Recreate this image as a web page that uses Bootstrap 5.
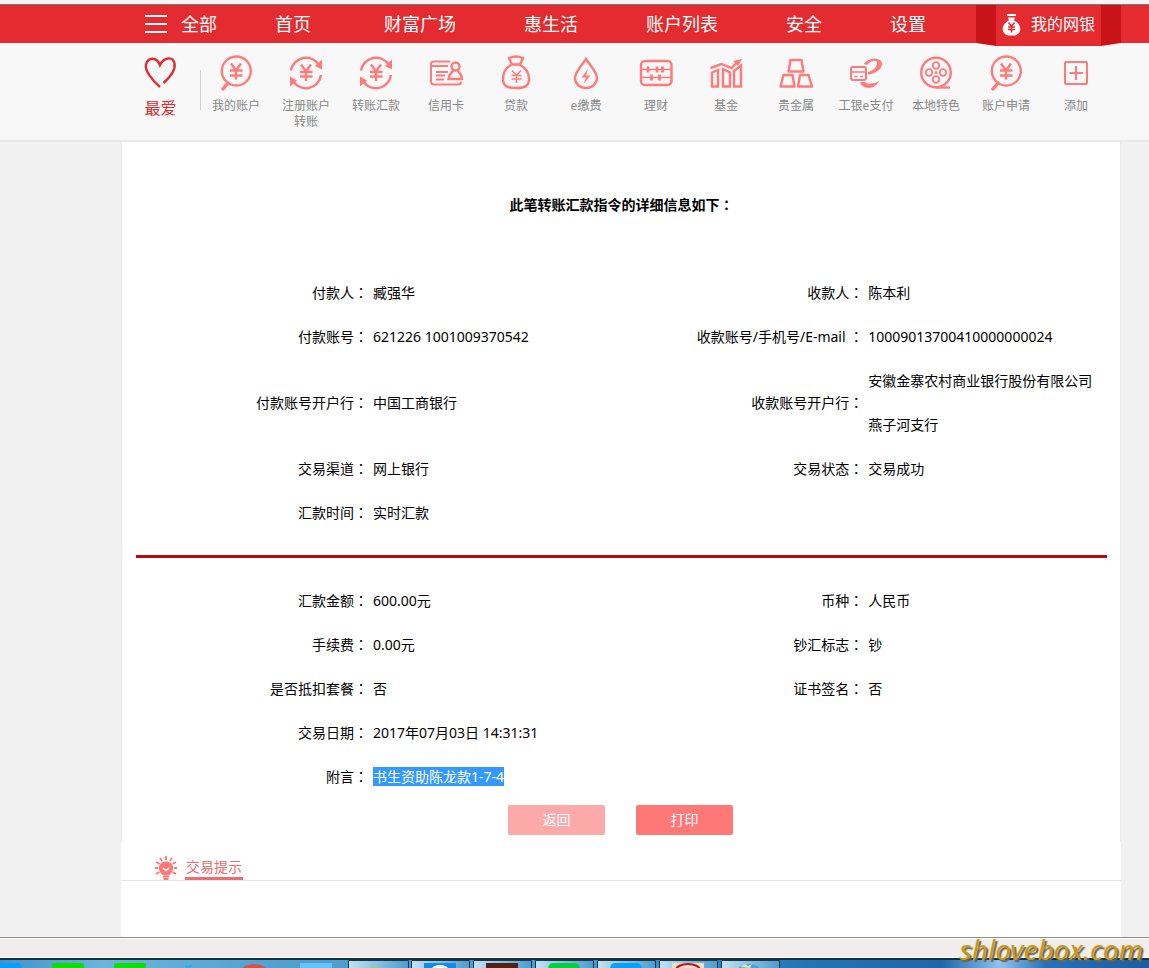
<!DOCTYPE html>
<html lang="zh-CN">
<head>
<meta charset="utf-8">
<meta name="viewport" content="width=device-width, initial-scale=1">
<title>转账汇款详细信息</title>
<link href="https://cdn.jsdelivr.net/npm/bootstrap@5.3.0/dist/css/bootstrap.min.css" rel="stylesheet">
<style>
  body { background: #f1f1f1; color: #000; font-family: "Noto Sans", "Noto Sans CJK SC", sans-serif; font-size: 14px; line-height: 20px; overflow-x: hidden; }
  a { text-decoration: none; }
  .window-edge { height: 5px; background: #f5f5f5; border-bottom: 1px solid #777; }
  .frame { padding-left: 121px; padding-right: 28px; }
  .main-bar { background: #e32b30; height: 38px; }
  .main-bar a { color: #fff; font-size: 18px; line-height: 38px; white-space: nowrap; }
  .main-links { gap: 68px; padding-left: 58px; }
  .main-links a:first-child { margin-right: 5px; }
  .all-link { padding-left: 24px; gap: 14px; }
  .ribbon { height: 41px; }
  .ribbon::before, .ribbon::after { content: ""; width: 20px; background: #c81418; clip-path: polygon(0 0, 100% 0, 100% 100%, 0 38px); }
  .ribbon::after { clip-path: polygon(0 0, 100% 0, 100% 38px, 0 100%); }
  .main-bar .ribbon a { width: 105px; gap: 10px; padding-bottom: 3px; background: #e32b30; font-size: 16px; }
  .sub-bar { background: #f8f8f8; height: 99px; border-bottom: 2px solid #e9e9e9; }
  .sub-bar a { width: 70px; padding-top: 12px; color: #888; font-size: 12px; line-height: 16px; text-align: center; }
  .sub-bar svg { display: block; margin: 0 auto 7px; fill: none; stroke: #ff7b7b; stroke-width: 2.400; }
  .sub-bar .favorite { width: 79px; color: #e32b30; font-size: 16px; line-height: 20px; }
  .sub-bar .favorite svg { stroke: #e32b30; }
  .divider { width: 1px; height: 40px; margin-top: 27px; background: #d0d0d0; }
  .sheet { background: #fff; border: solid #e9e9e9; border-width: 0 1px; padding: 52px 13px 7px 14px; }
  .sheet h1 { font-size: 14px; line-height: 20px; margin-bottom: 56px; }
  .detail { width: 100%; table-layout: fixed; }
  .detail th, .detail td { height: 44px; line-height: 44px; padding: 0 0 0 4px; font-weight: 400; vertical-align: middle; }
  .detail th { text-align: right; padding: 0 1px 0 0; white-space: nowrap; }
  .colon { font-family: "Noto Sans CJK TC", sans-serif; line-height: 20px; }
  .rule { height: 3px; margin: 20px 0 21px; background: #b5090f; }
  .picked { background: #3399ff; color: #fff; }
  .actions { gap: 31px; padding: 6px 2px 0 0; }
  .action { width: 97px; height: 30px; border: 0; border-radius: 2px; background: #ff7878; color: #fff; }
  .action-soft { background: #fca9a9; }
  .tips-head { height: 39px; border-bottom: 1px solid #e6e6e6; padding-left: 33px; gap: 7px; }
  .tips-head h2 { margin: 0; padding: 0 1px; font-size: 14px; font-weight: 400; line-height: 20px; height: 23px; border-bottom: 3px solid #ed6d6f; color: #ed6d6f; }
  .tips-body { height: 56px; }
  .status-strip { height: 21px; background: #f0edec; border-top: 1px solid #8e8e8e; border-bottom: 1px solid #fff; box-shadow: inset 0 1px #fff; }
  .taskbar { height: 10px; overflow: hidden; border-top: 2px solid #172f40; background: linear-gradient(90deg, #3e94ca, #69b5dc 9%, #4d9fd0 26%, #489dcf 50%, #2274b7 70%, #1b67ab 82%, #90c2ed 87%, #2672b7 91%, #1b5e9f); }
  .taskbar svg { display: block; }
  .watermark { position: absolute; right: 6px; bottom: 0; color: #cc990c; font: italic 400 28px/38px "Noto Sans", sans-serif; text-shadow: 2px 2px 1px #666; }
</style>
</head>
<body>
<svg width="0" height="0" class="position-absolute" aria-hidden="true">
  <symbol id="yen-search" viewBox="0 0 40 36"><circle cx="20.3" cy="16" r="14.5"/><path d="M12 28l-5 6" stroke-width="3.500" stroke-linecap="round"/><path d="M15 8.500l5 7 5-7M14 15.500h12.500M14 20.500h12.500M20 15v9.500"/></symbol>
  <symbol id="yen-cycle" viewBox="0 0 40 36"><path d="M5 15.500A15.200 15.200 0 0 1 33 10M35 20A15.200 15.200 0 0 1 7 26"/><path d="M36 4.500v10l-7-3.500zM4 21.500v10l7-6z" fill="#ff7b7b" stroke="none"/><path d="M15 9.500l5 7 5-7M14 17h12.500M14 21.500h12.500M20 17v9"/></symbol>
</svg>

<div class="window-edge"></div>
<header>
  <nav class="main-bar frame d-flex align-items-start" aria-label="主菜单">
    <a href="#" class="all-link d-flex align-items-center">
      <svg width="22" height="18" viewBox="0 0 22 18" stroke="#fff" stroke-width="2"><path d="M0 1h22M0 9h22M0 17h22"/></svg>全部
    </a>
    <div class="main-links d-flex">
      <a href="#">首页</a><a href="#">财富广场</a><a href="#">惠生活</a><a href="#">账户列表</a><a href="#">安全</a><a href="#">设置</a>
    </div>
    <div class="ribbon d-flex ms-auto">
      <a href="#" class="d-flex align-items-center justify-content-center">
        <svg width="19" height="23" viewBox="0 0 19 23"><path d="M5 1h9v2H5z" fill="#fff"/><path d="M6 4.500h7l-1 3c9 4 8 15-1 15H8C-1 22.500-2 11.500 7 7.500z" fill="#fff"/><path d="M6.500 9.500l3 4 3-4M6 14h7M6 16.500h7M9.500 13.500v6" fill="none" stroke="#e32b30" stroke-width="1.500"/></svg>我的网银
      </a>
    </div>
  </nav>
  <nav class="sub-bar frame d-flex align-items-start" aria-label="快捷功能">
    <a href="#" class="favorite"><svg width="40" height="36" viewBox="0 0 40 36"><path d="M19 32C12 26 3.500 16 5 9.500 7 1.500 16 2 19 10 23 2 32 1 33.500 8.500 35 16 27 24 22.500 28"/></svg>最爱</a>
    <div class="divider"></div>
    <a href="#"><svg width="40" height="36"><use href="#yen-search"/></svg>我的账户</a>
    <a href="#" class="px-2"><svg width="40" height="36"><use href="#yen-cycle"/></svg>注册账户转账</a>
    <a href="#"><svg width="40" height="36"><use href="#yen-cycle"/></svg>转账汇款</a>
    <a href="#"><svg width="40" height="36" viewBox="0 0 40 36"><path d="M24 6.500H8q-3 0-3 3v17q0 3 3 3h24q3 0 3-3M5 11h17M10 17h12M10 20.500h9M10 24.500h8" stroke-width="2"/><circle cx="29.500" cy="11.500" r="4"/><path d="M27 15c0 3-4.500 3-4.500 9H36c0-6-4-6-4-9"/></svg>信用卡</a>
    <a href="#"><svg width="40" height="36" viewBox="0 0 40 36"><path d="M16 9.500L13 3q7-3 14 0l-3 6.500zM15 10C9 13 7 18 7 24c0 7 4 9 13 9s13-2 13-9c0-6-3-11-9-14"/><path d="M16 15.500l4.500 5 4.500-5M15.500 20.500h10M15.500 24h10M20.500 20v8" stroke-width="1.500"/></svg>贷款</a>
    <a href="#"><svg width="40" height="36" viewBox="0 0 40 36"><path d="M20 4C16 10 9 17 9 23a11 10 0 0 0 22 0C31 17 24 10 20 4z"/><path d="M22 14l-6.500 8.500H20L17.500 29l7-8.500H20z" fill="#ff7b7b" stroke="none"/></svg>e缴费</a>
    <a href="#"><svg width="40" height="36" viewBox="0 0 40 36"><rect x="5" y="6" width="30.500" height="24" rx="4"/><path d="M5 14.500h30M5 22.500h30" stroke-width="1.300"/><path d="M12 11.500v6M21 11.500v6M26.500 11.500v6M15.500 19.500v6M23.500 19.500v6" stroke-width="2.800"/></svg>理财</a>
    <a href="#"><svg width="40" height="36" viewBox="0 0 40 36"><path d="M4.500 13l11-4 10 4 7-7"/><path d="M27 6l9-2-4 7z" fill="#ff7b7b" stroke="none"/><path d="M6 17.500l6-2.500v16.500H6zM17 14l7 3.500v14h-7zM28 16l7-5.500v21h-7z"/></svg>基金</a>
    <a href="#"><svg width="40" height="36" viewBox="0 0 40 36"><path d="M14.500 5h11l2 11.500h-15zM7.500 20h9l2 11.500H4.500zM24 20h8.500l3.500 11.500H22z" stroke-linejoin="round"/></svg>贵金属</a>
    <a href="#"><svg width="40" height="36" viewBox="0 0 40 36"><path d="M18 9C22 2 36 2 36 8.500 36 15 28 19 22 19.500V17c5-1 9-5 9-9 0-4-7-2-10 2zM14 27h5c3 3 9 2 14-1-3 8-16 10-19 1z" fill="#ff7b7b" stroke="none"/><rect x="5" y="12" width="15" height="13" rx="2" stroke-width="2"/><path d="M5 17h15M8.500 21.500h3M14 21.500h3" stroke-width="1.600"/></svg>工银e支付</a>
    <a href="#"><svg width="40" height="36" viewBox="0 0 40 36"><circle cx="20" cy="17.500" r="14.800"/><path d="M20 32.500h14"/><g stroke-width="1.800"><circle cx="20" cy="10.500" r="3.300"/><circle cx="20" cy="24.500" r="3.300"/><circle cx="13" cy="17.500" r="3.300"/><circle cx="27" cy="17.500" r="3.300"/></g><circle cx="20" cy="17.500" r="1.500" fill="#ff7b7b" stroke="none"/></svg>本地特色</a>
    <a href="#"><svg width="40" height="36"><use href="#yen-search"/></svg>账户申请</a>
    <a href="#"><svg width="40" height="36" viewBox="0 0 40 36"><rect x="9" y="7" width="22" height="22" rx="1" stroke-width="2"/><path d="M13.500 18h13.500M20 11v14" stroke-width="2"/></svg>添加</a>
  </nav>
</header>

<main class="frame">
  <section class="sheet">
    <h1 class="text-center fw-bold">此笔转账汇款指令的详细信息如下<span class="colon" lang="zh-TW">：</span></h1>
    <table class="detail">
      <colgroup><col style="width:24%"><col style="width:26%"><col style="width:25%"><col style="width:25%"></colgroup>
      <tr><th scope="row">付款人<span class="colon" lang="zh-TW">：</span></th><td>臧强华</td><th scope="row">收款人<span class="colon" lang="zh-TW">：</span></th><td>陈本利</td></tr>
      <tr><th scope="row">付款账号<span class="colon" lang="zh-TW">：</span></th><td>621226 1001009370542</td><th scope="row">收款账号/手机号/E-mail <span class="colon" lang="zh-TW">：</span></th><td>10009013700410000000024</td></tr>
      <tr><th scope="row">付款账号开户行<span class="colon" lang="zh-TW">：</span></th><td>中国工商银行</td><th scope="row">收款账号开户行<span class="colon" lang="zh-TW">：</span></th><td>安徽金寨农村商业银行股份有限公司<br>燕子河支行</td></tr>
      <tr><th scope="row">交易渠道<span class="colon" lang="zh-TW">：</span></th><td>网上银行</td><th scope="row">交易状态<span class="colon" lang="zh-TW">：</span></th><td>交易成功</td></tr>
      <tr><th scope="row">汇款时间<span class="colon" lang="zh-TW">：</span></th><td>实时汇款</td><td></td><td></td></tr>
    </table>
    <div class="rule"></div>
    <table class="detail">
      <colgroup><col style="width:24%"><col style="width:26%"><col style="width:25%"><col style="width:25%"></colgroup>
      <tr><th scope="row">汇款金额<span class="colon" lang="zh-TW">：</span></th><td>600.00元</td><th scope="row">币种<span class="colon" lang="zh-TW">：</span></th><td>人民币</td></tr>
      <tr><th scope="row">手续费<span class="colon" lang="zh-TW">：</span></th><td>0.00元</td><th scope="row">钞汇标志<span class="colon" lang="zh-TW">：</span></th><td>钞</td></tr>
      <tr><th scope="row">是否抵扣套餐<span class="colon" lang="zh-TW">：</span></th><td>否</td><th scope="row">证书签名<span class="colon" lang="zh-TW">：</span></th><td>否</td></tr>
      <tr><th scope="row">交易日期<span class="colon" lang="zh-TW">：</span></th><td>2017年07月03日 14:31:31</td><td></td><td></td></tr>
      <tr><th scope="row">附言<span class="colon" lang="zh-TW">：</span></th><td><span class="picked">书生资助陈龙款1-7-4</span></td><td></td><td></td></tr>
    </table>
    <div class="actions d-flex justify-content-center">
      <button type="button" class="action action-soft">返回</button>
      <button type="button" class="action">打印</button>
    </div>
  </section>
  <section class="bg-white">
    <div class="tips-head d-flex align-items-end">
      <svg width="24" height="24" viewBox="0 0 24 24" stroke="#ff7878" stroke-width="1.800"><path d="M12 0v4M6 2l2 3M18 2l-2 3M2 6l3.500 2M22 6l-3.500 2M1 12h3M20 12h3M2 18l3.500-2M22 18l-3.500-2" fill="none"/><path d="M8.500 19C2 13 5 5.500 12 5.500s10 7.500 3.500 13.500z" fill="#ff7878" stroke="none"/><path d="M9 20.500h6M9.500 23h5"/><path d="M9 12l3 2.500 3-2.500" stroke="#fff" stroke-width="1.500" fill="none"/></svg>
      <h2>交易提示</h2>
    </div>
    <div class="tips-body"></div>
  </section>
</main>

<footer class="position-relative">
  <div class="status-strip"></div>
  <div class="taskbar">
    <svg width="780" height="8" viewBox="0 0 780 8" aria-hidden="true">
      <defs><linearGradient id="glass"><stop offset="0" stop-color="#c5e1f1"/><stop offset="1" stop-color="#4b9dce"/></linearGradient></defs>
      <path d="M0 3h18q3 0 4 5H0z" fill="#08a0ff"/>
      <path d="M52 8V5q0-2 2-2h28q2 0 2 2v3zM114 8V5q0-2 2-2h28q2 0 2 2v3z" fill="#0be000"/>
      <path d="M185 5l4 1 4-2-3 4h-4z" fill="#26aee8"/>
      <ellipse cx="254" cy="10" rx="12" ry="6" fill="#dc5144"/><path d="M300 3h32v5h-32z" fill="#64c4ff"/>
      <g fill="url(#glass)" stroke="#143952"><path d="M348.500 9V.5h60V9z"/><path d="M411.500 9V.5h58V9z"/><path d="M473.500 9V.5h58V9z"/><path d="M535.500 9V.5h58V9z"/><path d="M597.500 9V.5h58V9z"/><path d="M659.500 9V.5h58V9z"/><path d="M721.500 9V.5h58V9z"/></g>
      <ellipse cx="374" cy="9" rx="5" ry="2" fill="#8fe030"/>
      <path d="M424 3h32v5h-32z" fill="#118be8"/><ellipse cx="440" cy="9" rx="8" ry="4" fill="#fff"/>
      <path d="M486 3h32v5h-32z" fill="#552116"/>
      <path d="M548 8q1-5 5-5h22q4 0 5 5z" fill="#05cf3d"/><path d="M610 8q1-5 5-5h22q4 0 5 5z" fill="#08a0ff"/>
      <path d="M672 3h32v5h-32z" fill="#e8e2cc"/><ellipse cx="688" cy="10" rx="12" ry="6" fill="none" stroke="#c2121a" stroke-width="2"/>
      <ellipse cx="749" cy="10" rx="11" ry="6" fill="#4f9fda"/><path d="M740 7l5-3 3 2 4-2-2 4z" fill="#d5f0a8"/>
    </svg>
  </div>
  <div class="watermark">shlovebox.com</div>
</footer>
<script src="https://cdn.jsdelivr.net/npm/bootstrap@5.3.0/dist/js/bootstrap.bundle.min.js"></script>
</body>
</html>
